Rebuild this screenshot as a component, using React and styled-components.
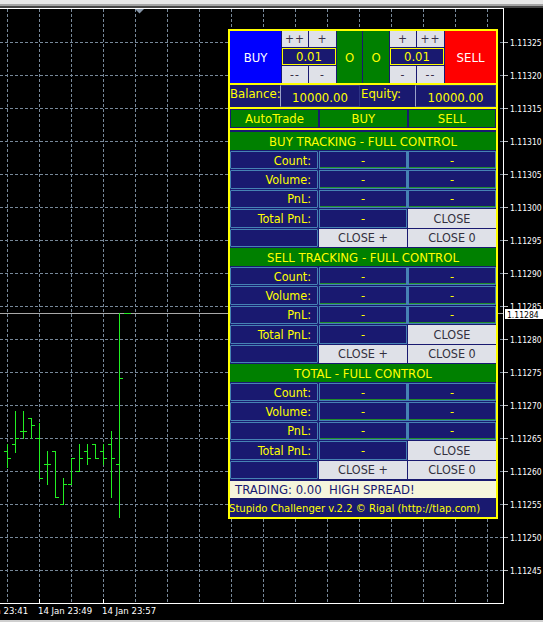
import React from 'react';
import styled, { createGlobalStyle } from 'styled-components';

const NAVY = '#191970';
const YELLOW = '#ffff00';
const GREEN = '#008000';
const STEEL = '#4682b4';
const BTN = '#dfe1e8';
const FONT = '"DejaVu Sans Condensed", "DejaVu Sans", sans-serif';

const GlobalStyle = createGlobalStyle`
  html, body {
    margin: 0;
    padding: 0;
    background: #000;
    overflow: hidden;
  }
`;

const Window = styled.div`
  width: 543px;
  height: 622px;
  display: flex;
  flex-direction: column;
  background: #000;
  font-family: ${FONT};
  font-stretch: condensed;
`;

const TopStrip = styled.div`
  flex: none;
  height: 8px;
  background: linear-gradient(#e6e6e6 0 4px, #a4a4a4 4px 6px, #454545 6px 8px);
`;

const ChartArea = styled.div`
  position: relative;
  flex: 1;
`;

const BottomStrip = styled.div`
  flex: none;
  height: 2px;
  background: #cfcfcf;
`;

const Chart = styled.svg`
  display: block;
`;

const AxisText = styled.text`
  font-family: ${FONT};
  font-stretch: condensed;
  font-size: ${(p) => p.$size || 8.5}px;
  fill: ${(p) => p.$fill || '#fff'};
`;

/* ---- panel ---- */

const Panel = styled.div`
  position: absolute;
  left: 228px;
  top: 21px;
  width: 270px;
  height: 490px;
  box-sizing: border-box;
  padding: 2px;
  background: ${YELLOW};
  display: flex;
  flex-direction: column;
  gap: 2px;
  font-size: 12.5px;
`;

const TopRow = styled.div`
  height: 52px;
  flex: none;
  display: grid;
  grid-template-columns: 51px 54px 25px 26px 54px 51px;
  column-gap: 1px;
  background: ${NAVY};
`;

const Block = styled.div`
  display: flex;
  align-items: center;
  justify-content: center;
  background: ${(p) => p.$bg};
  color: ${(p) => p.$color};
  font-size: 13px;
`;

const Stepper = styled.div`
  display: grid;
  grid-template-columns: 26px 1fr;
  grid-template-rows: 16px 17px 17px;
  gap: 1px;
`;

const StepButton = styled.div`
  display: flex;
  align-items: center;
  justify-content: center;
  background: ${BTN};
  color: #3a3048;
  font-size: 12px;
  letter-spacing: 1px;
`;

const LotBox = styled.div`
  grid-column: 1 / 3;
  display: flex;
  align-items: center;
  justify-content: center;
  box-sizing: border-box;
  border: 1px solid ${YELLOW};
  background: ${NAVY};
  color: ${YELLOW};
  font-size: 13px;
`;

const BalanceRow = styled.div`
  height: 22px;
  flex: none;
  display: grid;
  grid-template-columns: 49px 80px 53px 1fr;
  column-gap: 1px;
  background: ${NAVY};
  color: ${YELLOW};
`;

const BalanceLabel = styled.div`
  font-size: 13px;
  line-height: 17px;
  white-space: nowrap;
`;

const BalanceValue = styled.div`
  display: flex;
  align-items: center;
  justify-content: center;
  box-sizing: border-box;
  padding-top: 3px;
  border: 1px solid #2e3486;
  border-left-color: #9aa2c8;
  font-size: 13px;
`;

const ModeRow = styled.div`
  height: 19px;
  flex: none;
  box-sizing: border-box;
  padding: 1px;
  display: grid;
  grid-template-columns: 87px 1fr 1fr;
  column-gap: 2px;
  background: ${NAVY};
`;

const ModeButton = styled.div`
  display: flex;
  align-items: center;
  justify-content: center;
  background: ${GREEN};
  color: ${YELLOW};
  font-size: 13px;
`;

const Tracking = styled.div`
  flex: 1;
  display: flex;
  flex-direction: column;
  padding-top: 2px;
  background: ${NAVY};
`;

const Sections = styled.div`
  display: flex;
  flex-direction: column;
  gap: 1px;
`;

const Section = styled.div`
  display: flex;
  flex-direction: column;
  gap: 1px;
`;

const SectionTitle = styled.div`
  height: 18px;
  display: flex;
  align-items: center;
  justify-content: center;
  background: ${GREEN};
  color: ${YELLOW};
  font-size: 13px;
`;

const Grid = styled.div`
  height: 96px;
  display: grid;
  grid-template-columns: 88px 1fr 1fr;
  grid-template-rows: repeat(5, 1fr);
  gap: 1px;
`;

const Label = styled.div`
  display: flex;
  align-items: center;
  justify-content: flex-end;
  box-sizing: border-box;
  padding-right: 6px;
  border: 1px solid ${STEEL};
  border-radius: 1px;
  color: ${YELLOW};
`;

const Value = styled.div`
  display: flex;
  align-items: center;
  justify-content: center;
  box-sizing: border-box;
  border: 1px solid ${STEEL};
  box-shadow: ${(p) =>
    [p.$line && 'inset 0 -1px 0 #1f8a2a', p.$joined && `1px 0 0 ${STEEL}`]
      .filter(Boolean)
      .join(', ') || 'none'};
  color: ${YELLOW};
`;

const CloseButton = styled.div`
  display: flex;
  align-items: center;
  justify-content: center;
  background: ${BTN};
  color: #33303e;
`;

const StatusBar = styled.div`
  height: 17px;
  margin-top: 2px;
  padding-left: 5px;
  display: flex;
  align-items: center;
  background: #f5f5dc;
  color: ${NAVY};
  font-size: 13px;
  white-space: pre;
`;

const Footer = styled.div`
  height: 18px;
  margin-top: 1px;
  margin-left: -1px;
  display: flex;
  align-items: center;
  color: ${YELLOW};
  font-size: 11.2px;
  white-space: nowrap;
`;

/* ---- chart data ---- */

const hLines = Array.from({ length: 17 }, (_, i) => 42 + 33 * i);
const vLines = Array.from({ length: 16 }, (_, i) => 7 + 32 * i);

// x, high, low, open, close (screen y)
const bars = [
  [7, 444, 467, 451, 458],
  [15, 411, 452, 444, 438],
  [23, 411, 438, 431, 431],
  [31, 418, 438, 418, 425],
  [39, 423, 478, 438, 478],
  [47, 451, 484, 464, 464],
  [55, 451, 497, 451, 497],
  [63, 478, 504, 504, 484],
  [71, 458, 484, 484, 458],
  [79, 444, 471, 471, 458],
  [87, 444, 464, 451, 458],
  [95, 444, 458, 444, 458],
  [103, 444, 464, 451, 458],
  [111, 431, 497, 444, 458],
  [119, 313, 517, 464, 378],
  [127, 313, 313, 313, 313],
];

const times = [
  [-26, '14 Jan 23:41'],
  [38, '14 Jan 23:49'],
  [102, '14 Jan 23:57'],
];

const ChartCanvas = () => (
  <Chart width="543" height="612" viewBox="0 8 543 612">
    <g stroke="#778899" strokeDasharray="3 2" shapeRendering="crispEdges">
      {hLines.map((y) => (
        <line key={'h' + y} x1="0" x2="503" y1={y + 0.5} y2={y + 0.5} />
      ))}
      {vLines.map((x) => (
        <line key={'v' + x} x1={x + 0.5} x2={x + 0.5} y1="9" y2="603" />
      ))}
    </g>

    <line x1="0" x2="503" y1="313.5" y2="313.5" stroke="#a9a9a9" shapeRendering="crispEdges" />

    <g stroke="#22ee22" shapeRendering="crispEdges">
      {bars.map(([x, h, l, o, c]) => (
        <g key={x}>
          <line x1={x + 0.5} x2={x + 0.5} y1={h} y2={l + 1} />
          <line x1={x - 3} x2={x} y1={o + 0.5} y2={o + 0.5} />
          <line x1={x + 1} x2={x + 4} y1={c + 0.5} y2={c + 0.5} />
        </g>
      ))}
    </g>

    <polygon points="135,9 144,9 139.5,13.5" fill="#8796a8" />

    <g stroke="#fff" shapeRendering="crispEdges">
      <line x1="0" x2="504" y1="8.5" y2="8.5" />
      <line x1="503.5" x2="503.5" y1="8" y2="604" />
      <line x1="0" x2="504" y1="603.5" y2="603.5" />
      {times.map(([x]) => (
        <line key={x} x1={x + 1.5} x2={x + 1.5} y1="599" y2="603" />
      ))}
    </g>

    {hLines.map((y, i) => (
      <g key={'p' + y}>
        <line x1="504" x2="508" y1={y + 0.5} y2={y + 0.5} stroke="#c0c0c0" shapeRendering="crispEdges" />
        <AxisText x="510" y={y + 3.5}>
          {(1.11325 - 0.00005 * i).toFixed(5)}
        </AxisText>
      </g>
    ))}

    <rect x="505" y="309" width="38" height="10" fill="#fff" />
    <AxisText x="507" y="317.5" $fill="#000">1.11284</AxisText>

    {times.map(([x, t]) => (
      <AxisText key={t} x={x} y="613.5" $size={9.5}>
        {t}
      </AxisText>
    ))}
  </Chart>
);

/* ---- panel ---- */

const rows = ['Count:', 'Volume:', 'PnL:'];

const TrackSection = ({ title }) => (
  <Section>
    <SectionTitle>{title}</SectionTitle>
    <Grid>
      {rows.map((r) => (
        <React.Fragment key={r}>
          <Label>{r}</Label>
          <Value $line $joined>-</Value>
          <Value $line>-</Value>
        </React.Fragment>
      ))}
      <Label>Total PnL:</Label>
      <Value>-</Value>
      <CloseButton>CLOSE</CloseButton>
      <Label />
      <CloseButton>CLOSE +</CloseButton>
      <CloseButton>CLOSE 0</CloseButton>
    </Grid>
  </Section>
);

const ControlPanel = () => (
  <Panel>
    <TopRow>
      <Block $bg="#0000ff" $color="#fff">BUY</Block>
      <Stepper>
        <StepButton>++</StepButton>
        <StepButton>+</StepButton>
        <LotBox>0.01</LotBox>
        <StepButton>--</StepButton>
        <StepButton>-</StepButton>
      </Stepper>
      <Block $bg={GREEN} $color={YELLOW}>O</Block>
      <Block $bg={GREEN} $color={YELLOW}>O</Block>
      <Stepper>
        <StepButton>+</StepButton>
        <StepButton>++</StepButton>
        <LotBox>0.01</LotBox>
        <StepButton>-</StepButton>
        <StepButton>--</StepButton>
      </Stepper>
      <Block $bg="#ff0000" $color="#fff">SELL</Block>
    </TopRow>

    <BalanceRow>
      <BalanceLabel>Balance:</BalanceLabel>
      <BalanceValue>10000.00</BalanceValue>
      <BalanceLabel>Equity:</BalanceLabel>
      <BalanceValue>10000.00</BalanceValue>
    </BalanceRow>

    <ModeRow>
      <ModeButton>AutoTrade</ModeButton>
      <ModeButton>BUY</ModeButton>
      <ModeButton>SELL</ModeButton>
    </ModeRow>

    <Tracking>
      <Sections>
        <TrackSection title="BUY TRACKING - FULL CONTROL" />
        <TrackSection title="SELL TRACKING - FULL CONTROL" />
        <TrackSection title="TOTAL - FULL CONTROL" />
      </Sections>
      <StatusBar>{'TRADING: 0.00  HIGH SPREAD!'}</StatusBar>
      <Footer>Stupido Challenger v.2.2 © Rigal (http://tlap.com)</Footer>
    </Tracking>
  </Panel>
);

export default function App() {
  return (
    <Window>
      <GlobalStyle />
      <TopStrip />
      <ChartArea>
        <ChartCanvas />
        <ControlPanel />
      </ChartArea>
      <BottomStrip />
    </Window>
  );
}
